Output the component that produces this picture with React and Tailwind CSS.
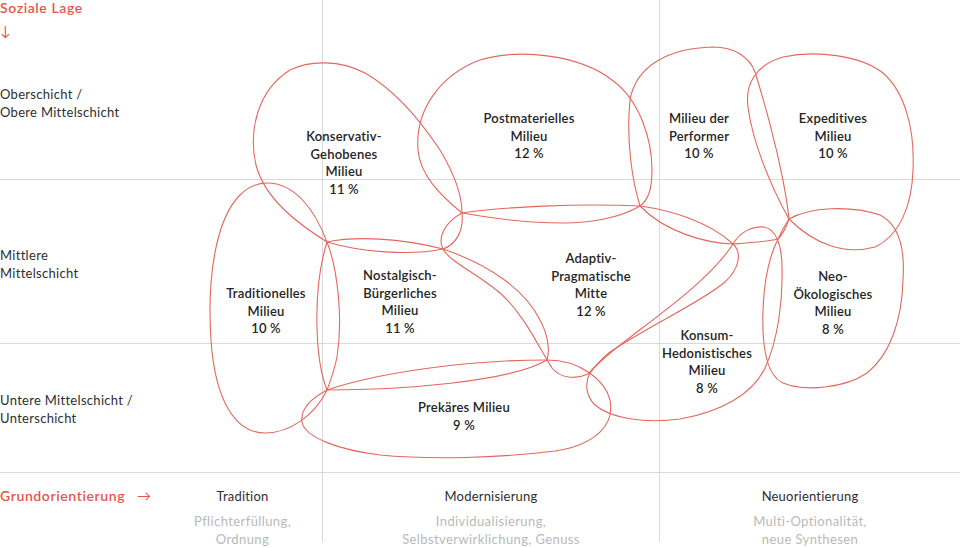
import React from "react";

const PATHS = [
  // Konservativ-Gehobenes
  "M327 242 C300 225 265 200 256 165 C248 130 258 90 290 70 C310 60 340 60 365 73 C395 90 420 120 440 150 C455 175 462 195 462 213 C464 232 455 245 443 249 C410 256 360 252 327 242 Z",
  // Postmaterielles
  "M462 213 C440 195 420 175 418 150 C415 110 440 75 480 60 C520 48 580 55 612 80 C640 100 652 140 652 170 C652 190 648 200 640 206 C620 218 590 223 563 223 C525 223 490 218 462 213 Z",
  // Performer
  "M640 206 C632 180 626 140 630 100 C636 65 670 48 713 47 C735 47 750 58 755 72 C770 120 785 180 789 219 C786 228 782 235 778 239 C765 242 748 243 733 244 C705 243 665 232 640 206 Z",
  // Expeditives
  "M789 219 C770 185 752 140 748 107 C745 85 755 65 783 57 C815 50 860 55 883 73 C905 92 915 130 913 170 C912 205 900 235 875 247 C845 255 815 245 789 219 Z",
  // Neo-Ökologisches
  "M789 219 C810 207 850 205 880 215 C900 225 905 250 903 280 C902 320 890 355 867 373 C845 388 805 392 783 383 C765 375 762 340 763 310 C764 280 770 255 778 239 C781 232 785 225 789 219 Z",
  // Adaptiv-Pragmatische
  "M462 213 C500 207 580 203 640 206 C670 210 710 222 733 244 C742 252 740 268 725 282 C700 303 650 325 610 352 C600 360 594 368 588 374 C575 380 560 378 552 368 C540 350 525 315 500 293 C475 272 450 262 443 249 C437 238 445 222 462 213 Z",
  // Konsum-Hedonistisches
  "M733 244 C740 232 752 226 764 227 C776 229 782 245 782 268 C783 300 778 340 765 368 C752 395 720 412 680 419 C645 424 610 418 595 405 C585 395 585 382 590 373 C610 345 700 295 733 244 Z",
  // Traditionelles
  "M267 183 C295 183 315 210 327 242 C338 270 343 320 337 357 C334 372 330 382 327 390 C315 415 290 433 265 433 C235 433 215 400 211 340 C207 280 215 220 240 195 C248 187 257 183 267 183 Z",
  // Nostalgisch-Bürgerliches
  "M327 242 C355 236 400 238 443 249 C490 265 525 290 540 320 C548 335 550 350 547 360 C510 382 400 390 327 390 C315 360 312 290 327 242 Z",
  // Prekäres
  "M327 390 C380 372 470 360 547 360 C580 360 605 380 610 400 C615 425 595 445 555 451 C500 458 430 460 380 455 C340 450 305 438 302 422 C300 408 312 398 327 390 Z",
];

function Milieu({ pos, lines }) {
  return (
    <div
      className={`absolute -translate-x-1/2 text-center whitespace-nowrap text-[13px] leading-[17.5px] font-semibold tracking-[0.2px] text-[#242424] ${pos}`}
    >
      {lines.map((l) => (
        <div key={l}>{l}</div>
      ))}
    </div>
  );
}

export default function App() {
  return (
    <div className="relative w-[960px] h-[548px] overflow-hidden bg-white font-['Lato',sans-serif] text-[13px] text-[#2e2e2e]">
      <div className="grid grid-cols-[323px_337px_300px] grid-rows-[180px_164px_129px_75px]">
        {/* Row 1 */}
        <div className="border-r border-b border-[#d9d9d9] flex flex-col">
          <div className="leading-[15px] font-semibold text-[#e2574c] text-[14px] tracking-[0.6px]">Soziale Lage</div>
          <div className="leading-[16px] mt-[8px] text-[#e2574c] text-[14px]">↓</div>
          <div className="mt-[46px] leading-[18px] tracking-[0.3px]">
            <div>Oberschicht /</div>
            <div>Obere Mittelschicht</div>
          </div>
        </div>
        <div className="border-r border-b border-[#d9d9d9]" />
        <div className="border-b border-[#d9d9d9]" />

        {/* Row 2 */}
        <div className="border-r border-b border-[#d9d9d9] pt-[66px] leading-[18px] tracking-[0.3px]">
          <div>Mittlere</div>
          <div>Mittelschicht</div>
        </div>
        <div className="border-r border-b border-[#d9d9d9]" />
        <div className="border-b border-[#d9d9d9]" />

        {/* Row 3 */}
        <div className="border-r border-b border-[#d9d9d9] pt-[47px] leading-[18px] tracking-[0.3px]">
          <div>Untere Mittelschicht /</div>
          <div>Unterschicht</div>
        </div>
        <div className="border-r border-b border-[#d9d9d9]" />
        <div className="border-b border-[#d9d9d9]" />

        {/* Bottom axis */}
        <div className="h-[69px] border-r border-[#d9d9d9] flex">
          <div className="w-[163px] pt-[14px] leading-[18px] font-semibold text-[#e2574c] text-[14px] tracking-[0.6px] whitespace-nowrap">
            Grundorientierung<span className="ml-[12px] font-normal">→</span>
          </div>
          <div className="flex-1 pt-[14px] text-center leading-[18px] whitespace-nowrap tracking-[0.2px]">
            <div>Tradition</div>
            <div className="mt-[7px] text-[#b9b9b9] tracking-[0.4px]">
              <div>Pflichterfüllung,</div>
              <div>Ordnung</div>
            </div>
          </div>
        </div>
        <div className="h-[69px] border-r border-[#d9d9d9] pt-[14px] text-center leading-[18px] whitespace-nowrap tracking-[0.2px]">
          <div>Modernisierung</div>
          <div className="mt-[7px] text-[#b9b9b9] tracking-[0.4px]">
            <div>Individualisierung,</div>
            <div>Selbstverwirklichung, Genuss</div>
          </div>
        </div>
        <div className="h-[69px] pt-[14px] text-center leading-[18px] whitespace-nowrap tracking-[0.2px]">
          <div>Neuorientierung</div>
          <div className="mt-[7px] text-[#b9b9b9] tracking-[0.4px]">
            <div>Multi-Optionalität,</div>
            <div>neue Synthesen</div>
          </div>
        </div>
      </div>

      <svg
        className="absolute left-0 top-0 pointer-events-none"
        width="960"
        height="548"
        viewBox="0 0 960 548"
        fill="none"
      >
        {PATHS.map((d, i) => (
          <path key={i} d={d} stroke="#e4675e" strokeWidth="1.1" fill="none" />
        ))}
      </svg>

      <Milieu pos="left-[344px] top-[128px]" lines={["Konservativ-", "Gehobenes", "Milieu", "11 %"]} />
      <Milieu pos="left-[529px] top-[110px]" lines={["Postmaterielles", "Milieu", "12 %"]} />
      <Milieu pos="left-[699px] top-[110px]" lines={["Milieu der", "Performer", "10 %"]} />
      <Milieu pos="left-[833px] top-[110px]" lines={["Expeditives", "Milieu", "10 %"]} />
      <Milieu pos="left-[266px] top-[285px]" lines={["Traditionelles", "Milieu", "10 %"]} />
      <Milieu pos="left-[400px] top-[267px]" lines={["Nostalgisch-", "Bürgerliches", "Milieu", "11 %"]} />
      <Milieu pos="left-[591px] top-[250px]" lines={["Adaptiv-", "Pragmatische", "Mitte", "12 %"]} />
      <Milieu pos="left-[833px] top-[268px]" lines={["Neo-", "Ökologisches", "Milieu", "8 %"]} />
      <Milieu pos="left-[707px] top-[327px]" lines={["Konsum-", "Hedonistisches", "Milieu", "8 %"]} />
      <Milieu pos="left-[464px] top-[399px]" lines={["Prekäres Milieu", "9 %"]} />
    </div>
  );
}
